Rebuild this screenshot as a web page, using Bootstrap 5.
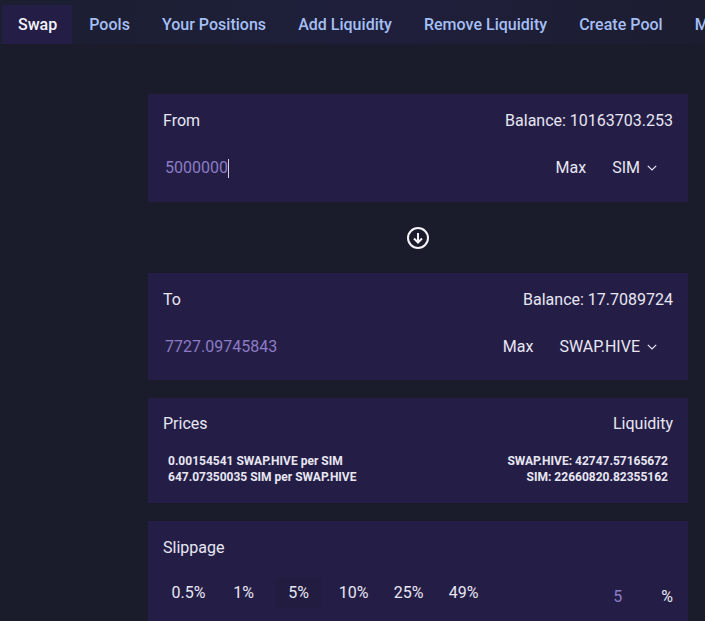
<!DOCTYPE html>
<html lang="en"><head><meta charset="utf-8"><title>Swap</title>
<link href="https://cdn.jsdelivr.net/npm/bootstrap@5.3.0/dist/css/bootstrap.min.css" rel="stylesheet">
<style>
html,body{height:621px;overflow:hidden}
body{background:#1a1b2b;font-family:Roboto,"Liberation Sans",sans-serif;color:#e8e6f2;font-size:16px}
.topnav{height:44px;background:linear-gradient(90deg,#1b1f30,#1f1f3c 55%,#1c1d30);flex-wrap:nowrap;overflow:hidden;white-space:nowrap}
.topnav .nav-link{color:#a5bff5;font-weight:500;padding:5px 16px 0;height:39px;line-height:30px;margin-top:5px;letter-spacing:.015px}
.topnav .nav-link.active{background:#241e47;color:#f5f3fb;margin-left:2px;margin-right:1px;padding-right:15px}
.mainwrap{margin:50px 17px 0 148px}
.panelbox{background:#241e47;padding:15px 15px 0}
.panelbox+.panelbox{margin-top:18px}
.tallbox{height:107px}.firstbox{height:108px}.pricebox{height:105px;padding-top:14px}
.amountText{color:#8c7cc4}
.rowgap{margin-top:23px;padding-left:2px}
.maxbtn{margin-right:26px}
.chev{margin-left:7px}
.swapicon{height:71px}
.fine{font-size:12px;font-weight:700;line-height:16px;color:#e8e6f2;padding:0 5px;margin-top:17px}
.caret{width:1px;height:19px;background:#d8d4ea}
.slipopt{width:47px;height:30px;line-height:30px;text-align:center;margin:0 4px}
.slipopt.cur{background:#211c40;border-radius:4px}
.sliprow{margin-top:17px;margin-left:-2px}
.slipval{color:#8c7cc4;margin-right:39px;margin-top:8px}
.slippct{margin-top:8px}
.slipbox{height:110px}
</style></head><body>
<ul class="nav topnav">
<li class="nav-item"><a class="nav-link active" href="#">Swap</a></li>
<li class="nav-item"><a class="nav-link" href="#">Pools</a></li>
<li class="nav-item"><a class="nav-link" href="#">Your Positions</a></li>
<li class="nav-item"><a class="nav-link" href="#">Add Liquidity</a></li>
<li class="nav-item"><a class="nav-link" href="#">Remove Liquidity</a></li>
<li class="nav-item"><a class="nav-link" href="#">Create Pool</a></li>
<li class="nav-item"><a class="nav-link" href="#">Markets</a></li>
</ul>
<div class="mainwrap">
<div class="panelbox firstbox">
<div class="d-flex justify-content-between"><span>From</span><span>Balance: 10163703.253</span></div>
<div class="d-flex justify-content-between align-items-center rowgap">
<div class="d-flex align-items-center"><span class="amountText">5000000</span><span class="caret"></span></div>
<div class="d-flex align-items-center pe-3"><span class="maxbtn">Max</span><span>SIM</span><svg class="chev" width="10" height="6" viewBox="0 0 10 6"><path d="M.8.8 5 5l4.2-4.2" fill="none" stroke="#e8e6f2" stroke-width="1.2"/></svg></div>
</div></div>
<div class="swapicon d-flex align-items-center justify-content-center"><svg width="22" height="22" viewBox="0 0 22 22" fill="none" stroke="#f5f3fb" stroke-width="2"><circle cx="11" cy="11" r="10"/><path d="M11 6v9.5M7 11.5l4 4 4-4"/></svg></div>
<div class="panelbox tallbox">
<div class="d-flex justify-content-between"><span>To</span><span>Balance: 17.7089724</span></div>
<div class="d-flex justify-content-between align-items-center rowgap">
<span class="amountText">7727.09745843</span>
<div class="d-flex align-items-center pe-3"><span class="maxbtn">Max</span><span>SWAP.HIVE</span><svg class="chev" width="10" height="6" viewBox="0 0 10 6"><path d="M.8.8 5 5l4.2-4.2" fill="none" stroke="#e8e6f2" stroke-width="1.2"/></svg></div>
</div></div>
<div class="panelbox pricebox">
<div class="d-flex justify-content-between"><span>Prices</span><span>Liquidity</span></div>
<div class="d-flex justify-content-between fine"><div>0.00154541 SWAP.HIVE per SIM<br>647.07350035 SIM per SWAP.HIVE</div><div class="text-end">SWAP.HIVE: 42747.57165672<br>SIM: 22660820.82355162</div></div>
</div>
<div class="panelbox slipbox">
<div>Slippage</div>
<div class="d-flex align-items-center sliprow"><div class="d-flex"><span class="slipopt">0.5%</span><span class="slipopt">1%</span><span class="slipopt cur">5%</span><span class="slipopt">10%</span><span class="slipopt">25%</span><span class="slipopt">49%</span></div><span class="ms-auto slipval">5</span><span class="slippct">%</span></div>
</div>
</div>
</body></html>
